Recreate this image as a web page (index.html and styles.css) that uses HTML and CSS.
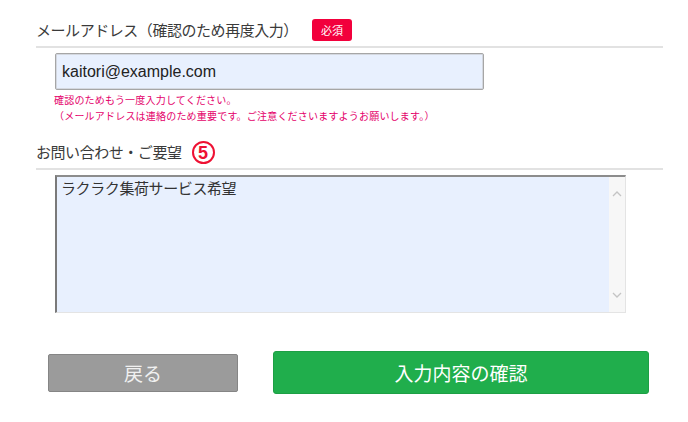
FILE: index.html
```html
<!DOCTYPE html>
<html lang="ja">
<head>
<meta charset="utf-8">
<title>お問い合わせ</title>
<link rel="stylesheet" href="styles.css">
</head>
<body>
<form class="form">
  <div class="field-head">
    <span class="label">メールアドレス（確認のため再度入力）</span>
    <span class="badge">必須</span>
  </div>
  <div class="field-body">
    <input class="input" type="text" value="kaitori@example.com">
    <p class="note">確認のためもう一度入力してください。<br>（メールアドレスは連絡のため重要です。ご注意くださいますようお願いします。）</p>
  </div>

  <div class="field-head second">
    <span class="label">お問い合わせ・ご要望</span>
    <span class="num">5</span>
  </div>
  <div class="field-body">
    <div class="textarea-box">
      <textarea class="textarea">ラクラク集荷サービス希望</textarea>
      <div class="scrollbar">
        <svg width="10" height="6" viewBox="0 0 10 6"><path d="M1 5 L5 1 L9 5" fill="none" stroke="#c4c4c4" stroke-width="1.3"/></svg>
        <svg width="10" height="6" viewBox="0 0 10 6"><path d="M1 1 L5 5 L9 1" fill="none" stroke="#c4c4c4" stroke-width="1.3"/></svg>
      </div>
    </div>
  </div>

  <div class="actions">
    <button type="button" class="btn btn-back">戻る</button>
    <button type="button" class="btn btn-confirm">入力内容の確認</button>
  </div>
</form>
</body>
</html>
```

FILE: styles.css
```css
html, body {
  margin: 0;
  padding: 0;
  background: #ffffff;
}
body {
  font-family: "Noto Sans CJK JP", "Noto Sans", sans-serif;
  color: #333333;
}
.form {
  padding: 18px 25px 0 36px;
}
.field-head {
  display: flex;
  align-items: center;
  min-height: 24px;
  padding-bottom: 4px;
  border-bottom: 2px solid #e2e2e2;
}
.field-head.second {
  margin-top: 16px;
}
.label {
  font-size: 15px;
  letter-spacing: -0.45px;
  line-height: 24px;
  color: #3a3a3a;
}
.badge {
  margin-left: 14px;
  width: 40px;
  height: 22px;
  border-radius: 3px;
  background: #f2003c;
  color: #ffffff;
  font-size: 11px;
  line-height: 22px;
  text-align: center;
}
.num {
  margin-left: 10px;
  width: 19px;
  height: 19px;
  border: 2.5px solid #ee1133;
  border-radius: 50%;
  color: #ee1133;
  font-family: "Liberation Sans", Arial, sans-serif;
  font-weight: bold;
  font-size: 18px;
  line-height: 20px;
  text-align: center;
}
.field-body {
  padding: 5px 0 0 19px;
}
.input {
  display: block;
  box-sizing: border-box;
  width: 429px;
  height: 37px;
  margin: 0;
  padding: 0 6px;
  border: 1px solid #a6a6a6;
  border-radius: 2px;
  box-shadow: inset 0 0 0 1px #d4d8e0;
  background: #e8f0fe;
  font-family: "Liberation Sans", Arial, sans-serif;
  font-size: 16px;
  color: #222222;
}
.note {
  margin: 2px 0 0 -1px;
  font-size: 10px;
  letter-spacing: 0.2px;
  line-height: 16px;
  color: #e4006a;
}
.textarea-box {
  display: flex;
  box-sizing: border-box;
  width: 571px;
  height: 138px;
  border-top: 2px solid #8c8c8c;
  border-left: 2px solid #7a7a7a;
  border-right: 1px solid #e4e4e4;
  border-bottom: 1px solid #e4e4e4;
  background: #e8f0fe;
}
.textarea {
  flex: 1;
  margin: 0;
  padding: 1px 4px;
  border: none;
  outline: none;
  resize: none;
  overflow: hidden;
  background: transparent;
  font-family: "Noto Sans CJK JP", sans-serif;
  font-size: 15px;
  letter-spacing: -0.4px;
  line-height: 20px;
  color: #333333;
}
.scrollbar {
  width: 16px;
  background: #f7f7f7;
  display: flex;
  flex-direction: column;
  justify-content: space-between;
  align-items: center;
  padding: 14px 0 14px;
}
.actions {
  display: flex;
  align-items: center;
  gap: 35px;
  margin: 38px 0 0 12px;
}
.btn {
  box-sizing: border-box;
  margin: 0;
  font-family: "Noto Sans CJK JP", sans-serif;
  font-size: 19px;
  cursor: pointer;
}
.btn-back {
  width: 190px;
  height: 38px;
  border: 1px solid #858585;
  border-radius: 2px;
  background: #9b9b9b;
  color: #f0f0f0;
}
.btn-confirm {
  width: 376px;
  height: 43px;
  border: 1px solid #1d9f45;
  border-radius: 3px;
  background: #20ae4c;
  color: #ffffff;
}
```
